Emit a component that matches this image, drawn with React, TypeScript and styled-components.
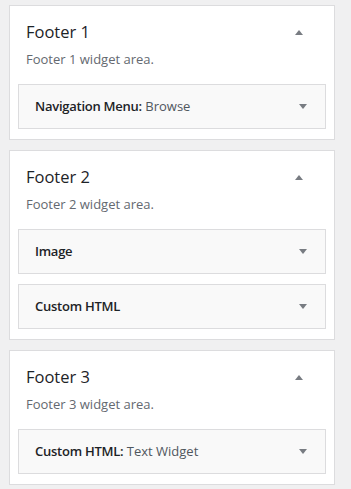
import React from "react";
import styled, { createGlobalStyle } from "styled-components";

const GlobalStyle = createGlobalStyle`
  html, body {
    margin: 0;
    padding: 0;
    background: #f0f0f1;
    font-family: "Open Sans", "Noto Sans", sans-serif;
  }
`;

const Page = styled.div`
  padding: 5px 0 6px 9px;
  display: flex;
  flex-direction: column;
  gap: 10px;
`;

const Panel = styled.section`
  width: 326px;
  box-sizing: border-box;
  background: #fff;
  border: 1px solid #dcdcde;
  padding: 16px 8px 10px;
`;

const Header = styled.div`
  display: flex;
  align-items: center;
  justify-content: space-between;
  padding: 0 23px 0 8px;
`;

const Title = styled.h3`
  margin: 0;
  font-size: 16.5px;
  line-height: 20px;
  font-weight: 400;
  color: #1d2327;
`;

const Description = styled.p`
  margin: 8px 0 16px 8px;
  font-size: 13px;
  line-height: 18px;
  color: #646970;
`;

const WidgetList = styled.div`
  display: flex;
  flex-direction: column;
  gap: 10px;
`;

const Widget = styled.div`
  display: flex;
  align-items: center;
  justify-content: space-between;
  background: #f9f9f9;
  border: 1px solid #dcdcde;
  padding: 12px 18px 13px 16px;
  font-size: 13px;
  line-height: 18px;
`;

const WidgetName = styled.span`
  font-weight: 600;
  letter-spacing: -0.25px;
  color: #1d2327;
`;

const WidgetSubtitle = styled.span`
  color: #50575e;
`;

const Arrow = styled.span<{ $up?: boolean }>`
  width: 0;
  height: 0;
  border-left: 4px solid transparent;
  border-right: 4px solid transparent;
  ${(p) =>
    p.$up
      ? "border-bottom: 5px solid #787c82;"
      : "border-top: 5px solid #787c82;"}
`;

type WidgetItem = { name: string; sub?: string };

const areas: { title: string; widgets: WidgetItem[] }[] = [
  { title: "Footer 1", widgets: [{ name: "Navigation Menu", sub: "Browse" }] },
  { title: "Footer 2", widgets: [{ name: "Image" }, { name: "Custom HTML" }] },
  { title: "Footer 3", widgets: [{ name: "Custom HTML", sub: "Text Widget" }] },
];

export default function App() {
  return (
    <>
      <GlobalStyle />
      <Page>
        {areas.map((area) => (
          <Panel key={area.title}>
            <Header>
              <Title>{area.title}</Title>
              <Arrow $up />
            </Header>
            <Description>{area.title} widget area.</Description>
            <WidgetList>
              {area.widgets.map((w) => (
                <Widget key={w.name}>
                  <span>
                    <WidgetName>
                      {w.name}
                      {w.sub ? ":" : ""}
                    </WidgetName>
                    {w.sub && <WidgetSubtitle> {w.sub}</WidgetSubtitle>}
                  </span>
                  <Arrow />
                </Widget>
              ))}
            </WidgetList>
          </Panel>
        ))}
      </Page>
    </>
  );
}
